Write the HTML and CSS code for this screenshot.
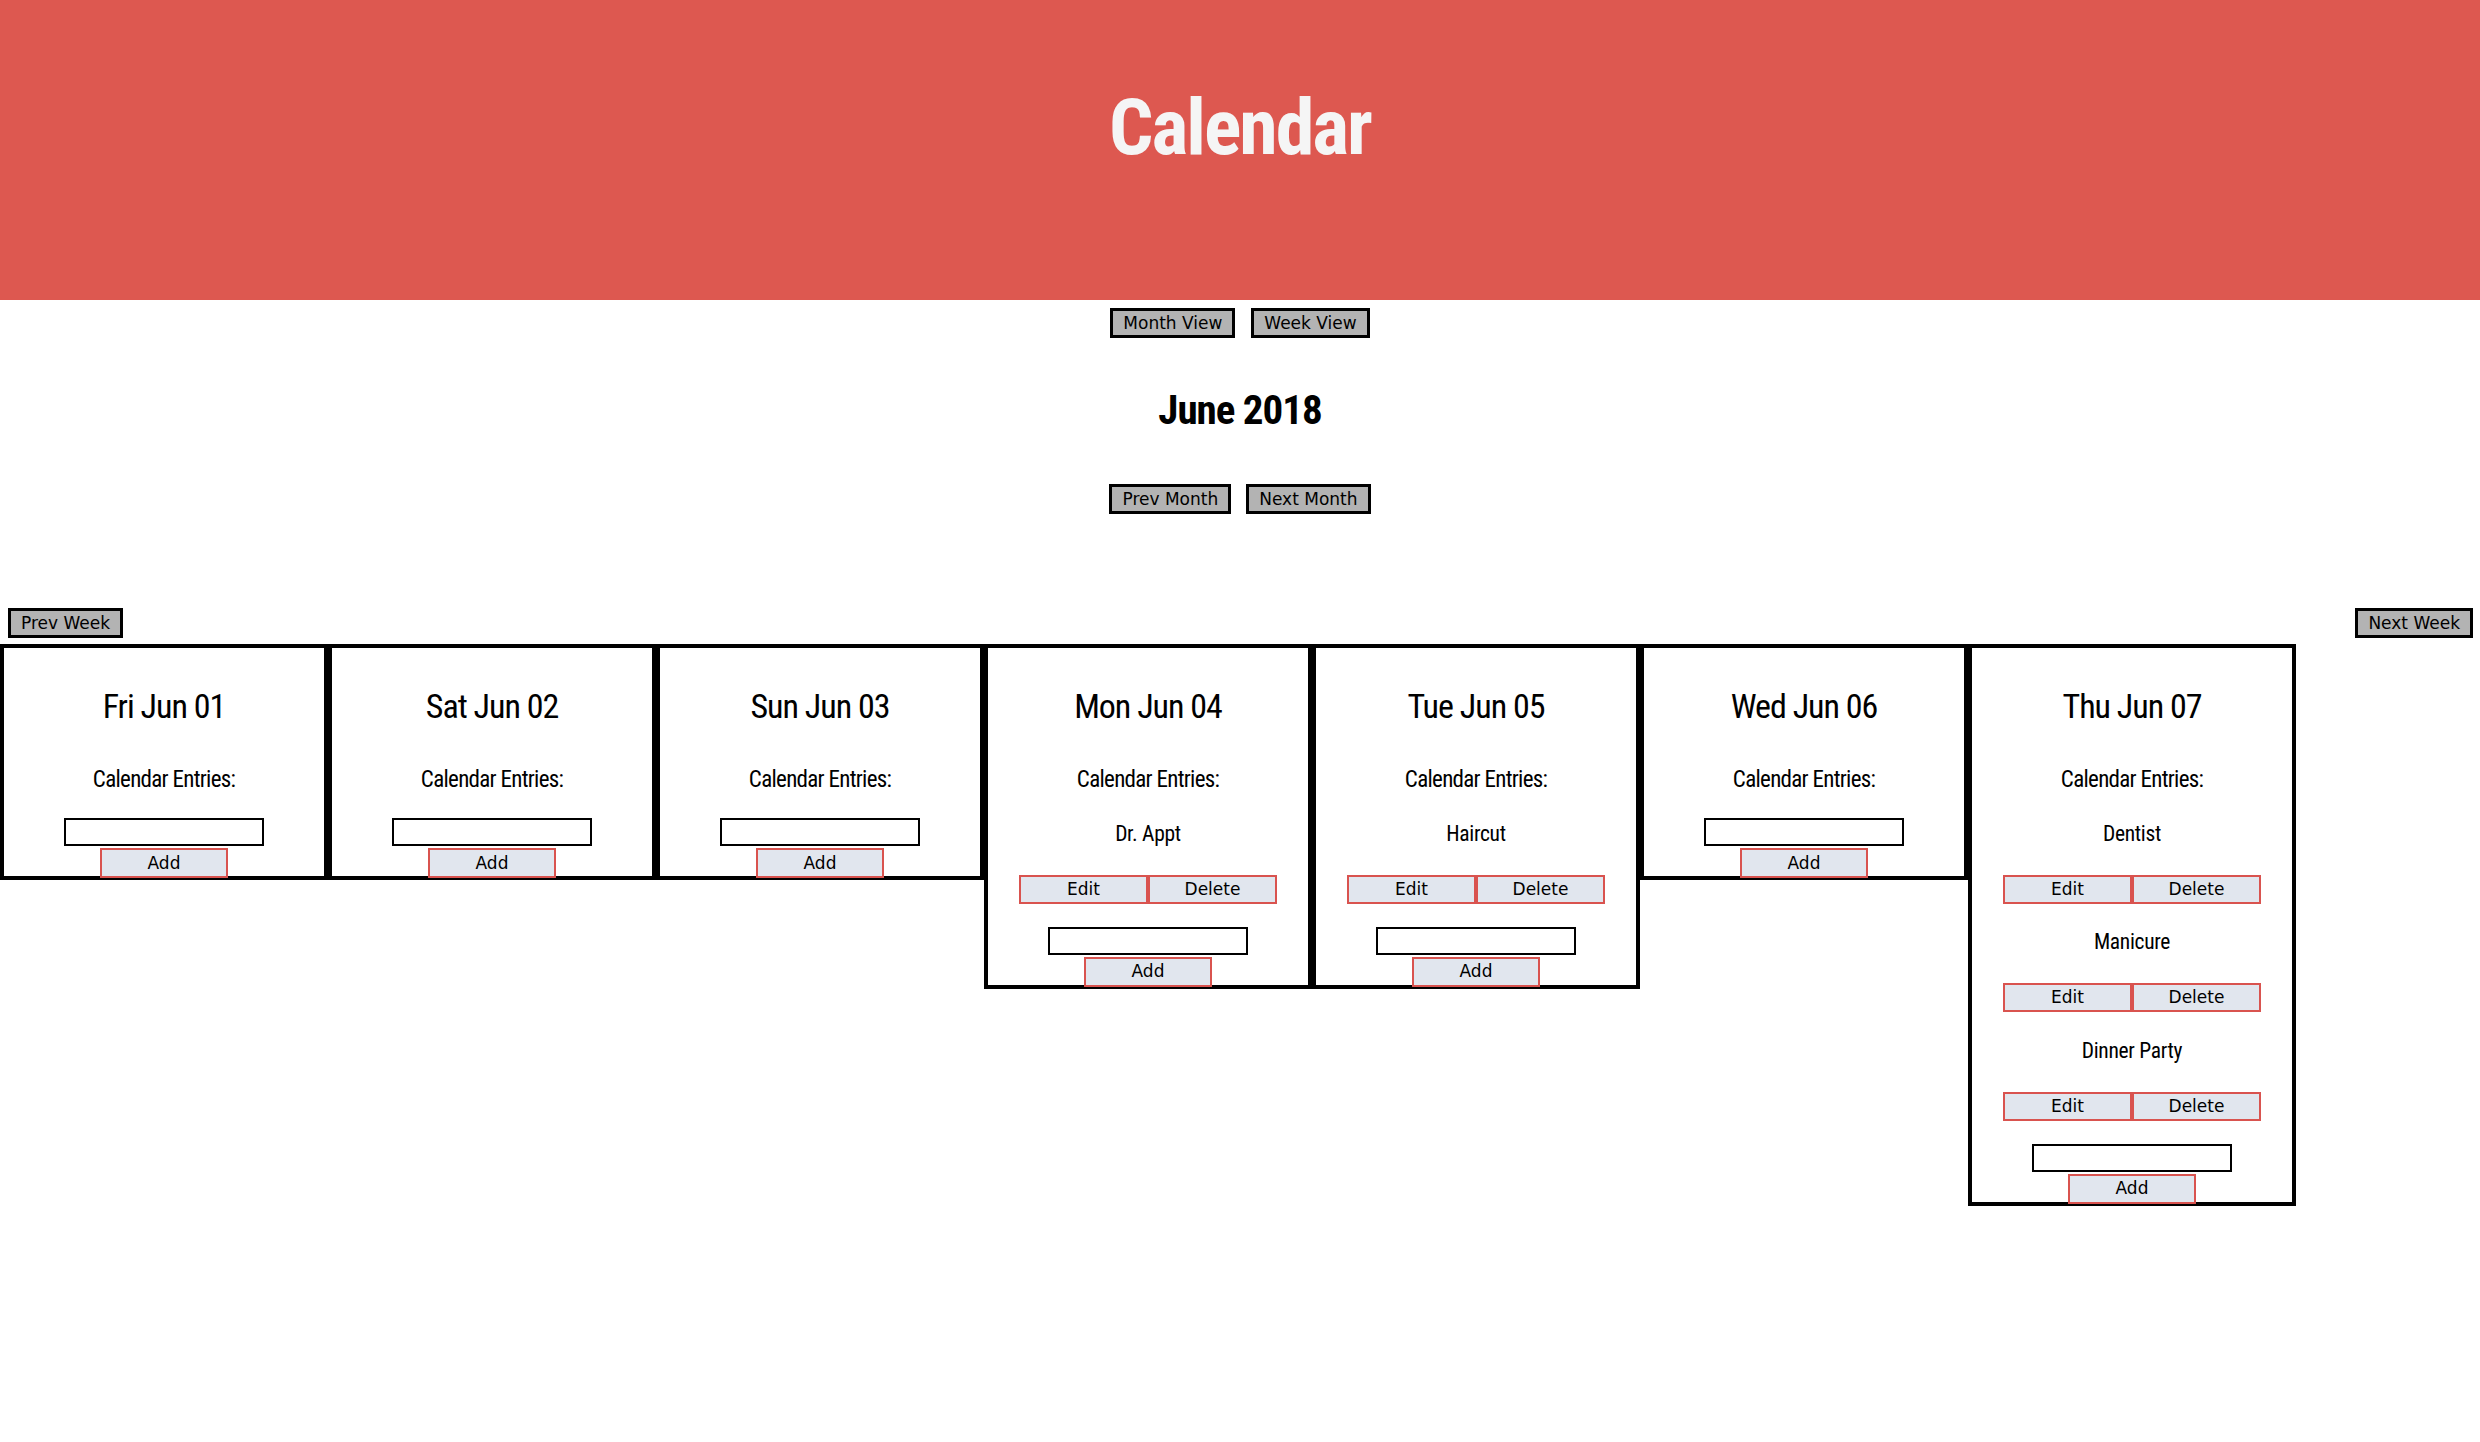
FILE: index.html
```html
<!DOCTYPE html>
<html lang="en">
<head>
<meta charset="utf-8">
<title>Calendar</title>
<link rel="stylesheet" href="styles.css">
</head>
<body>
<header class="site-header">
  <h1 class="site-title">Calendar</h1>
</header>
<main>
  <div class="view-nav">
    <button class="nav-btn">Month View</button>
    <button class="nav-btn">Week View</button>
  </div>
  <h2 class="month-title">June 2018</h2>
  <div class="view-nav month-nav">
    <button class="nav-btn">Prev Month</button>
    <button class="nav-btn">Next Month</button>
  </div>
  <div class="week-nav">
    <button class="nav-btn">Prev Week</button>
    <button class="nav-btn">Next Week</button>
  </div>
  <div class="week">
    <section class="day">
      <h3 class="day-title">Fri Jun 01</h3>
      <p class="entries-label">Calendar Entries:</p>
      <div class="add-form"><input class="add-input" type="text"><button class="act-btn add-btn">Add</button></div>
    </section>
    <section class="day">
      <h3 class="day-title">Sat Jun 02</h3>
      <p class="entries-label">Calendar Entries:</p>
      <div class="add-form"><input class="add-input" type="text"><button class="act-btn add-btn">Add</button></div>
    </section>
    <section class="day">
      <h3 class="day-title">Sun Jun 03</h3>
      <p class="entries-label">Calendar Entries:</p>
      <div class="add-form"><input class="add-input" type="text"><button class="act-btn add-btn">Add</button></div>
    </section>
    <section class="day">
      <h3 class="day-title">Mon Jun 04</h3>
      <p class="entries-label">Calendar Entries:</p>
      <div class="entry">
        <p class="entry-text">Dr. Appt</p>
        <div class="entry-actions"><button class="act-btn">Edit</button><button class="act-btn">Delete</button></div>
      </div>
      <div class="add-form"><input class="add-input" type="text"><button class="act-btn add-btn">Add</button></div>
    </section>
    <section class="day">
      <h3 class="day-title">Tue Jun 05</h3>
      <p class="entries-label">Calendar Entries:</p>
      <div class="entry">
        <p class="entry-text">Haircut</p>
        <div class="entry-actions"><button class="act-btn">Edit</button><button class="act-btn">Delete</button></div>
      </div>
      <div class="add-form"><input class="add-input" type="text"><button class="act-btn add-btn">Add</button></div>
    </section>
    <section class="day">
      <h3 class="day-title">Wed Jun 06</h3>
      <p class="entries-label">Calendar Entries:</p>
      <div class="add-form"><input class="add-input" type="text"><button class="act-btn add-btn">Add</button></div>
    </section>
    <section class="day">
      <h3 class="day-title">Thu Jun 07</h3>
      <p class="entries-label">Calendar Entries:</p>
      <div class="entry">
        <p class="entry-text">Dentist</p>
        <div class="entry-actions"><button class="act-btn">Edit</button><button class="act-btn">Delete</button></div>
      </div>
      <div class="entry">
        <p class="entry-text">Manicure</p>
        <div class="entry-actions"><button class="act-btn">Edit</button><button class="act-btn">Delete</button></div>
      </div>
      <div class="entry">
        <p class="entry-text">Dinner Party</p>
        <div class="entry-actions"><button class="act-btn">Edit</button><button class="act-btn">Delete</button></div>
      </div>
      <div class="add-form"><input class="add-input" type="text"><button class="act-btn add-btn">Add</button></div>
    </section>
  </div>
</main>
</body>
</html>
```

FILE: styles.css
```css
* {
  box-sizing: border-box;
}

html, body {
  margin: 0;
  padding: 0;
  background: #ffffff;
}

body {
  font-family: "Roboto Condensed", "DejaVu Sans Condensed", "Liberation Sans Narrow", "Arial Narrow", sans-serif;
  font-stretch: condensed;
  color: #000;
}

.site-header {
  height: 300px;
  padding-top: 83px;
  background: #dd5850;
  text-align: center;
}

.site-title {
  margin: 0;
  font-size: 78px;
  line-height: 90px;
  font-weight: 700;
  letter-spacing: -2px;
  color: #f5f5f5;
}

.view-nav {
  display: flex;
  justify-content: center;
  gap: 16px;
  margin-top: 8px;
}

.month-nav {
  gap: 15px;
  margin-top: 49px;
}

.nav-btn {
  height: 30px;
  padding: 0 10px;
  border: 3px solid #000;
  border-radius: 0;
  background: #b3b3b3;
  color: #000;
  font-family: "DejaVu Sans", "Liberation Sans", sans-serif;
  font-stretch: normal;
  font-size: 17px;
  line-height: 24px;
}

.month-title {
  margin: 47px 0 0;
  text-align: center;
  font-size: 41px;
  line-height: 50px;
  font-weight: 700;
  letter-spacing: -1px;
}

.week-nav {
  display: flex;
  justify-content: space-between;
  margin-top: 94px;
  padding: 0 7px 0 8px;
}

.week {
  display: flex;
  align-items: flex-start;
  margin-top: 6px;
}

.day {
  width: 328px;
  flex: 0 0 328px;
  border: 4px solid #000;
  text-align: center;
}

.day-title {
  margin: 38px 0 0;
  font-size: 34px;
  line-height: 40px;
  font-weight: 400;
  letter-spacing: -1px;
}

.entries-label {
  margin: 39px 0 0;
  font-size: 23px;
  line-height: 30px;
  letter-spacing: -0.7px;
}

.entry-text {
  margin: 24.5px 0 0;
  font-size: 21.5px;
  line-height: 28px;
  letter-spacing: -0.3px;
}

.entry-actions {
  display: flex;
  justify-content: center;
  margin-top: 27px;
}

.act-btn {
  width: 129px;
  height: 29px;
  padding: 0;
  border: 2px solid #d9534f;
  border-radius: 0;
  background: #e1e6ee;
  color: #000;
  font-family: "DejaVu Sans", "Liberation Sans", sans-serif;
  font-stretch: normal;
  font-size: 17px;
  line-height: 25px;
}

.add-form {
  display: flex;
  flex-direction: column;
  align-items: center;
  margin-top: 23px;
}

.add-input {
  width: 200px;
  height: 28px;
  margin: 0;
  padding: 0 4px;
  border: 2px solid #000;
  border-radius: 0;
  background: #fff;
}

.add-btn {
  width: 128px;
  height: 30px;
  margin-top: 2px;
  margin-bottom: -2px;
}
```
